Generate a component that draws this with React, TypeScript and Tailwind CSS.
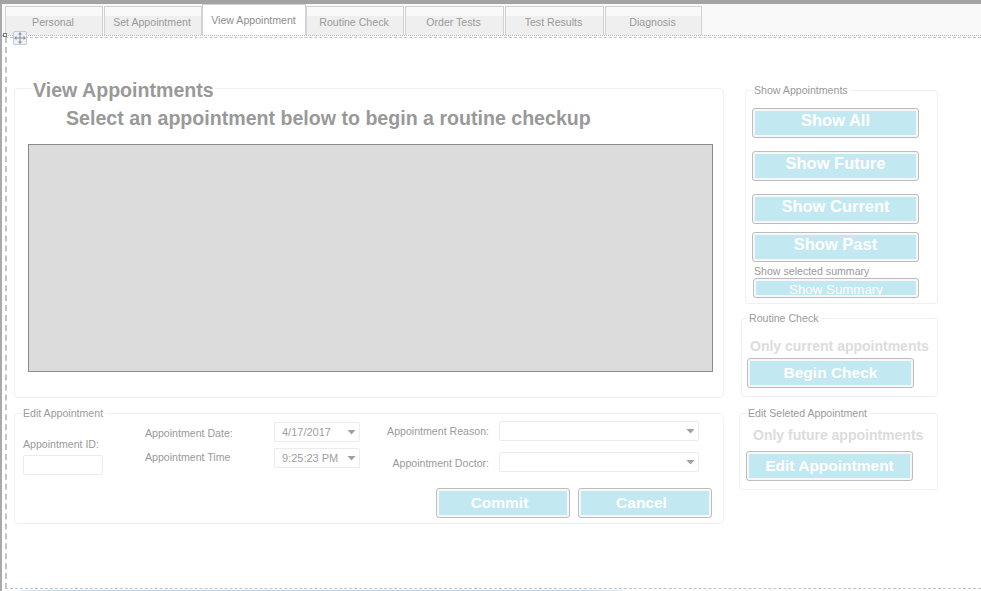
import type { ReactNode } from "react";

const tabs = [
  { label: "Personal", width: "w-[98px]", margin: "" },
  { label: "Set Appointment", width: "w-[98px]", margin: "ml-px" },
  { label: "View Appointment", width: "w-[104px]", margin: "", active: true },
  { label: "Routine Check", width: "w-[98px]", margin: "" },
  { label: "Order Tests", width: "w-[99px]", margin: "ml-px" },
  { label: "Test Results", width: "w-[99px]", margin: "ml-px" },
  { label: "Diagnosis", width: "w-[97px]", margin: "ml-px" },
];

const Arrow = () => (
  <svg width="9" height="5" viewBox="0 0 9 5" className="shrink-0">
    <polygon points="0.5,0 8.5,0 4.5,4.5" fill="#a0a0a0" />
  </svg>
);

const MoveHandle = () => (
  <div className="absolute left-[13px] top-[31px] flex h-[14px] w-[14px] items-center justify-center rounded-[2px] border border-[#c3cbdc] bg-[#eef1f7]">
    <svg width="12" height="12" viewBox="0 0 12 12">
      <path d="M6 1v10M1 6h10" stroke="#8f8f8f" strokeWidth="1" />
      <polygon points="6,0 4,2.5 8,2.5" fill="#8f8f8f" />
      <polygon points="6,12 4,9.5 8,9.5" fill="#8f8f8f" />
      <polygon points="0,6 2.5,4 2.5,8" fill="#8f8f8f" />
      <polygon points="12,6 9.5,4 9.5,8" fill="#8f8f8f" />
    </svg>
  </div>
);

const Panel = ({
  title,
  className,
  legendClass,
  children,
}: {
  title: string;
  className: string;
  legendClass: string;
  children: ReactNode;
}) => (
  <fieldset className={`rounded-[4px] border border-[#f0f0f2] ${className}`}>
    <legend className={legendClass}>{title}</legend>
    {children}
  </fieldset>
);

const BlueButton = ({
  label,
  className,
  textClass,
}: {
  label: string;
  className: string;
  textClass: string;
}) => (
  <button
    type="button"
    className={`block shrink-0 overflow-hidden rounded-[3px] border border-[#bdbdbd] bg-[#f7f7f7] p-[2px] ${className}`}
  >
    <span
      className={`block h-full w-full overflow-hidden bg-[#c2e8f2] text-center text-white ${textClass}`}
    >
      {label}
    </span>
  </button>
);

const Picker = ({ value, className }: { value?: string; className: string }) => (
  <div
    className={`flex h-[20px] items-center justify-between rounded-[2px] border border-[#ececf0] text-[11px] text-[#a0a0a0] ${className}`}
  >
    <span>{value}</span>
    <Arrow />
  </div>
);

const smallLegend = "text-[10.6px] leading-[13px] text-[#9a9a9a]";
const hintText = "text-[14px] font-bold leading-[16px] text-[#dcdcdc]";
const showText = "text-[16.5px] font-bold leading-[19px]";
const actionText = "pt-[2px] text-[15.5px] font-bold leading-[19px]";
const formText = "pt-[2px] pr-[7px] text-[15.5px] font-bold leading-[19px]";
const summaryText = "pt-[1px] text-[13.3px] leading-[16px]";

export default function App() {
  return (
    <div className="relative flex h-[591px] w-[981px] flex-col overflow-hidden bg-white font-['Liberation_Sans',Arial,sans-serif]">
      <div className="h-[4px] shrink-0 bg-[#a3a3a3]" />

      <div className="flex min-h-0 flex-1">
        <div className="w-[2px] shrink-0 bg-[#a9a9a9]" />

        <div className="flex min-w-0 flex-1 flex-col">
          <div className="flex h-[32px] shrink-0 items-end border-b border-dotted border-[#b5b5b5] bg-[#f9f9f9] pl-[3px]">
            {tabs.map((tab) => (
              <div
                key={tab.label}
                className={`flex items-center justify-center border border-b-0 border-[#d2d2d4] text-[10.6px] ${tab.width} ${tab.margin} ${
                  tab.active
                    ? "h-[31px] bg-white pt-px pr-px text-[#8e8e8e]"
                    : "h-[29px] bg-[linear-gradient(#f9f9f9_0%,#f9f9f9_33%,#efefef_33%)] pt-[4px] pr-[2px] text-[#9a9a9a]"
                }`}
              >
                {tab.label}
              </div>
            ))}
          </div>

          <div className="ml-[3px] mt-px flex h-[552px] shrink-0 gap-[15px] border-y border-l-2 border-dashed border-[#c4c4c4] pl-[7px] pt-[37px]">
            <div className="w-[710px] shrink-0">
              <Panel
                title="View Appointments"
                className="h-[323px]"
                legendClass="ml-[18px] pr-[1px] pt-[4px] text-[19.6px] font-bold leading-[23px] text-[#999999]"
              >
                <p className="ml-[51px] mt-[5px] text-[19.6px] font-bold leading-[23px] text-[#999999]">
                  Select an appointment below to begin a routine checkup
                </p>
                <div className="ml-[13px] mt-[14px] h-[228px] w-[685px] border border-[#8a8a8a] bg-[#dcdcdc]" />
              </Panel>

              <Panel
                title="Edit Appointment"
                className="mt-[9px] h-[117px]"
                legendClass={`ml-[8px] pr-[3px] ${smallLegend}`}
              >
                <div className="flex h-[55px] pl-[8px] text-[10.6px] leading-[13px] text-[#9a9a9a]">
                  <div className="w-[122px] shrink-0 pt-[18px]">
                    <div>Appointment ID:</div>
                    <div className="mt-[4px] h-[20px] w-[80px] rounded-[2px] border border-[#ececf0]" />
                  </div>
                  <div className="w-[129px] shrink-0 pt-[7px]">
                    <div>Appointment Date:</div>
                    <div className="mt-[11px]">Appointment Time</div>
                  </div>
                  <div className="w-[86px] shrink-0 pt-[2px]">
                    <Picker value="4/17/2017" className="w-[86px] pl-[7px] pr-[3px]" />
                    <Picker value="9:25:23 PM" className="mt-[6px] w-[86px] pl-[7px] pr-[3px]" />
                  </div>
                  <div className="w-[129px] shrink-0 pt-[5px] text-right">
                    <div>Appointment Reason:</div>
                    <div className="mt-[19px]">Appointment Doctor:</div>
                  </div>
                  <div className="ml-[10px] w-[200px] shrink-0 pt-[1px]">
                    <Picker className="w-[200px] pr-[3px]" />
                    <Picker className="mt-[11px] w-[200px] pr-[3px]" />
                  </div>
                </div>
                <div className="mt-[13px] flex justify-end gap-[8px] pr-[11px]">
                  <BlueButton label="Commit" textClass={formText} className="h-[30px] w-[134px]" />
                  <BlueButton label="Cancel" textClass={formText} className="h-[30px] w-[134px]" />
                </div>
              </Panel>
            </div>

            <div className="w-[199px] shrink-0 pt-[9px]">
              <Panel
                title="Show Appointments"
                className="ml-[6px] h-[220px]"
                legendClass={`ml-[8px] pr-[3px] ${smallLegend}`}
              >
                <BlueButton label="Show All" textClass={showText} className="ml-[6px] mt-[11px] h-[30px] w-[167px]" />
                <BlueButton label="Show Future" textClass={showText} className="ml-[6px] mt-[13px] h-[30px] w-[167px]" />
                <BlueButton label="Show Current" textClass={showText} className="ml-[6px] mt-[13px] h-[30px] w-[167px]" />
                <BlueButton label="Show Past" textClass={showText} className="ml-[6px] mt-[8px] h-[30px] w-[167px]" />
                <div className="ml-[8px] mt-[3px] text-[10.6px] leading-[13px] text-[#9a9a9a]">
                  Show selected summary
                </div>
                <BlueButton label="Show Summary" textClass={summaryText} className="ml-[7px] h-[20px] w-[166px]" />
              </Panel>

              <Panel
                title="Routine Check"
                className="ml-[2px] mt-[8px] h-[85px]"
                legendClass={`ml-[7px] pr-[3px] ${smallLegend}`}
              >
                <div className={`ml-[8px] mt-[13px] ${hintText}`}>Only current appointments</div>
                <BlueButton label="Begin Check" textClass={actionText} className="ml-[5px] mt-[4px] h-[30px] w-[167px]" />
              </Panel>

              <Panel
                title="Edit Seleted Appointment"
                className="mt-[10px] h-[83px]"
                legendClass={`ml-[8px] pr-[3px] ${smallLegend}`}
              >
                <div className={`ml-[13px] mt-[7px] ${hintText}`}>Only future appointments</div>
                <BlueButton label="Edit Appointment" textClass={actionText} className="ml-[6px] mt-[8px] h-[30px] w-[167px]" />
              </Panel>
            </div>
          </div>

          <div className="ml-[18px] mt-px h-[2px] w-[602px] shrink-0 bg-[linear-gradient(90deg,#dbe9f4,#b4d3ea_8%,#b4d3ea_92%,#dbe9f4)]" />
        </div>
      </div>

      <div className="absolute left-[3px] top-[33px] h-[4px] w-[4px] border border-[#777777] bg-white" />
      <MoveHandle />
    </div>
  );
}
